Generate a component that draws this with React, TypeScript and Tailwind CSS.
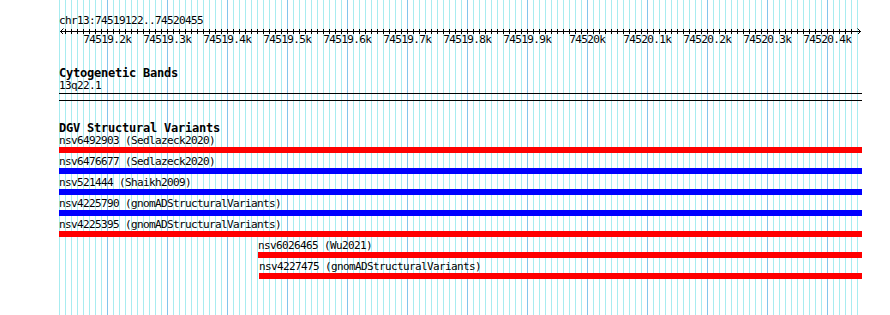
import React from "react";

// positions are relative to the track area, which starts at x = 59
const majorLabels = [
  "74519.2k",
  "74519.3k",
  "74519.4k",
  "74519.5k",
  "74519.6k",
  "74519.7k",
  "74519.8k",
  "74519.9k",
  "74520k",
  "74520.1k",
  "74520.2k",
  "74520.3k",
  "74520.4k",
];

interface Feature {
  name: string;
  color: "red" | "blue";
  offset?: number;
}

const features: Feature[] = [
  { name: "nsv6492903 (Sedlazeck2020)", color: "red" },
  { name: "nsv6476677 (Sedlazeck2020)", color: "blue" },
  { name: "nsv521444 (Shaikh2009)", color: "blue" },
  { name: "nsv4225790 (gnomADStructuralVariants)", color: "blue" },
  { name: "nsv4225395 (gnomADStructuralVariants)", color: "red" },
  { name: "nsv6026465 (Wu2021)", color: "red", offset: 199 },
  { name: "nsv4227475 (gnomADStructuralVariants)", color: "red", offset: 200 },
];

const GridLines = () => {
  const lines = [];
  for (let j = -8; j <= 125; j++) {
    const x = 107 + j * 6 + 0.5;
    const major = j % 10 === 0;
    lines.push(
      <line
        key={j}
        x1={x}
        x2={x}
        y1={0}
        y2={315}
        stroke={major ? "#84c4ec" : "#a8ecf0"}
        strokeWidth={1}
      />
    );
  }
  return (
    <svg
      className="absolute left-0 top-0"
      width={890}
      height={315}
      shapeRendering="crispEdges"
    >
      {lines}
    </svg>
  );
};

const Ruler = () => {
  const ticks = [];
  for (let j = -7; j <= 124; j++) {
    const x = 48 + j * 6 + 0.5;
    ticks.push(<line key={j} x1={x} x2={x} y1={2} y2={7} stroke="black" />);
  }
  return (
    <svg width={803} height={7} className="block">
      <g shapeRendering="crispEdges">
        <line x1={1} x2={802} y1={4.5} y2={4.5} stroke="black" />
        {ticks}
      </g>
      <polyline points="4.5,1.5 1.5,4.5 4.5,7.5" fill="none" stroke="black" />
      <polyline points="798.5,1.5 801.5,4.5 798.5,7.5" fill="none" stroke="black" />
    </svg>
  );
};

export default function App() {
  return (
    <div className="relative w-[890px] h-[315px] bg-white overflow-hidden text-black">
      <GridLines />
      <div className="relative ml-[59px] w-[803px] pt-[15px] font-['DejaVu_Sans_Mono',monospace] text-[11px] tracking-[-0.62px]">
        <div className="h-[12px] leading-[12px] whitespace-pre">chr13:74519122..74520455</div>
        <Ruler />
        <div className="relative h-[12px] leading-[12px]">
          {majorLabels.map((label, i) => (
            <span
              key={label}
              className="absolute top-0 -translate-x-1/2 whitespace-pre"
              style={{ left: 48.3 + i * 60 }}
            >
              {label}
            </span>
          ))}
        </div>

        <div className="mt-[21px] h-[13px] leading-[13px] text-[12px] font-bold tracking-[-0.22px] whitespace-pre">
          Cytogenetic Bands
        </div>
        <div className="h-[12px] leading-[12px] whitespace-pre">13q22.1</div>
        <div className="mt-[1px] h-px bg-black" />
        <div className="mt-[6px] h-px bg-black" />

        <div className="mt-[21px] h-[13px] leading-[13px] text-[12px] font-bold tracking-[-0.22px] whitespace-pre">
          DGV Structural Variants
        </div>
        <div className="flex flex-col">
          {features.map((f) => (
            <div
              key={f.name}
              className={f.offset === 199 ? "ml-[199px] mb-[3px]" : f.offset === 200 ? "ml-[200px] mb-[3px]" : "mb-[3px]"}
            >
              <div className="h-[12px] leading-[12px] whitespace-pre">{f.name}</div>
              <div className={f.color === "red" ? "h-[6px] bg-[#ff0000]" : "h-[6px] bg-[#0000ff]"} />
            </div>
          ))}
        </div>
      </div>
    </div>
  );
}
